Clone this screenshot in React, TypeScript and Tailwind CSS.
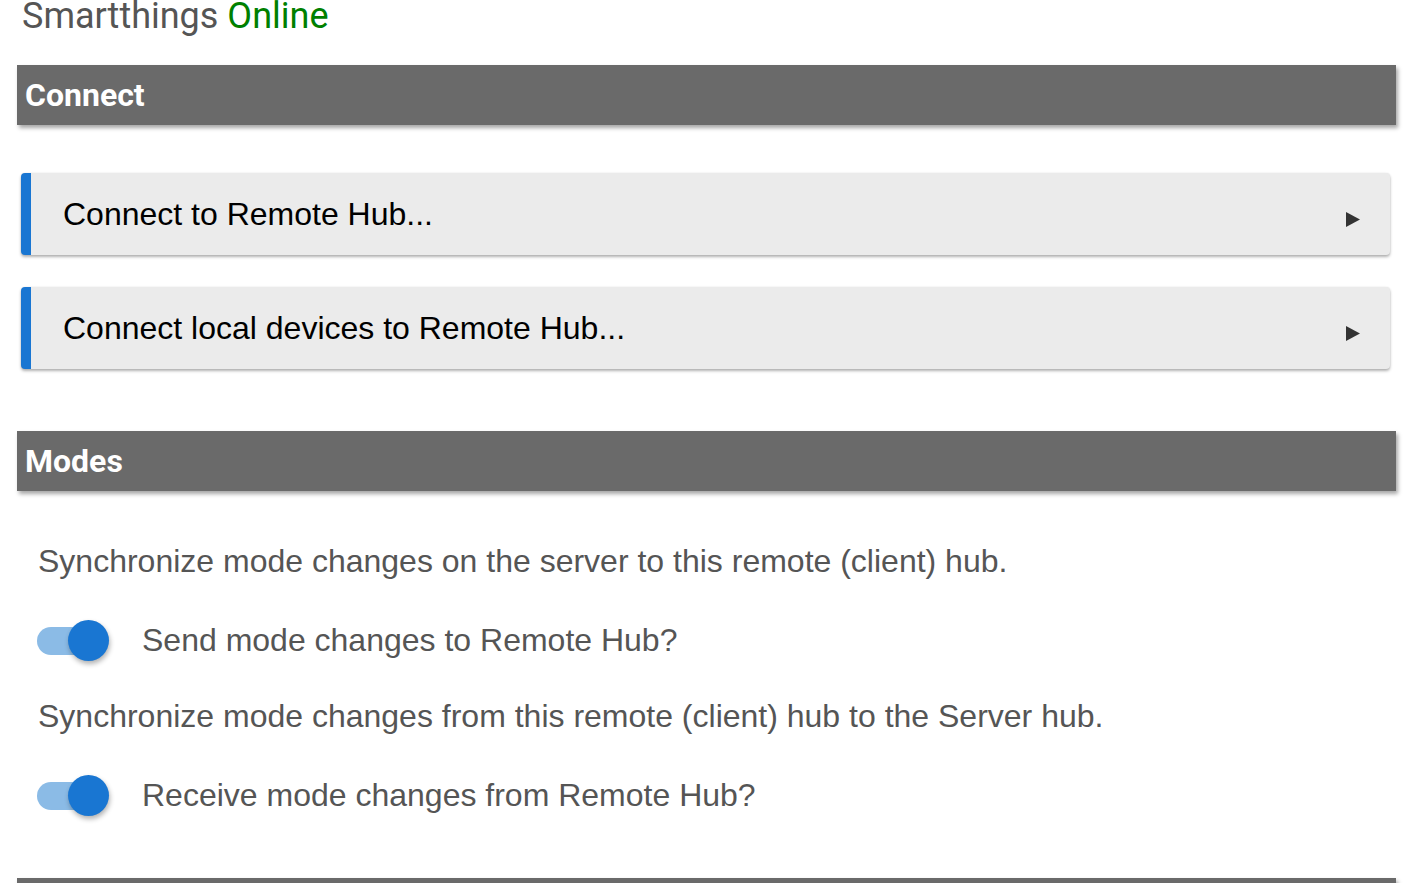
import { useState } from "react";

function SectionHeader({ title }: { title?: string }) {
  return (
    <div className="flex h-[60px] items-center bg-[#6a6a6a] pl-2 shadow-[2px_3px_4px_rgba(0,0,0,0.35)]">
      {title && <h2 className="font-['Roboto',sans-serif] text-[32px] font-bold text-white">{title}</h2>}
    </div>
  );
}

function LinkItem({ label }: { label: string }) {
  return (
    <div className="flex h-[82px] items-center justify-between rounded-[4px] border-l-[10px] border-[#1976d2] bg-[#ebebeb] pl-[32px] pr-[30px] shadow-[0_2px_3px_rgba(0,0,0,0.3),0_0_2px_rgba(0,0,0,0.08)]">
      <span className="mb-[1px] font-['Liberation_Sans',Arial,sans-serif] text-[32px] text-black">{label}</span>
      <svg viewBox="0 0 14 15" className="mt-[11px] h-[15px] w-[14px]" fill="#333">
        <path d="M0 0 L14 7.5 L0 15 Z" />
      </svg>
    </div>
  );
}

function Toggle({ label, initial }: { label: string; initial: boolean }) {
  const [on, setOn] = useState(initial);
  return (
    <div className="-ml-[1px] flex h-[48px] items-center">
      <button
        type="button"
        onClick={() => setOn(!on)}
        className="relative h-[40px] w-[72px] shrink-0"
      >
        <span
          className={`absolute left-0 top-[7px] h-[28px] w-[68px] rounded-full ${on ? "bg-[#8bbbe6]" : "bg-[#bdbdbd]"}`}
        />
        <span
          className={`absolute top-0 h-[41px] w-[41px] rounded-full shadow-[1px_3px_5px_rgba(0,0,0,0.3)] ${on ? "left-[31px] bg-[#1976d2]" : "left-0 bg-[#fafafa]"}`}
        />
      </button>
      <span className="ml-[33px] font-['Liberation_Sans',Arial,sans-serif] text-[32px] text-[#555]">{label}</span>
    </div>
  );
}

export default function App() {
  return (
    <main className="min-h-screen w-[1420px] overflow-hidden bg-white pl-[17px] pr-[24px]">
      <h1 className="-mt-[2px] pl-[5px] font-['Roboto',sans-serif] text-[36px] leading-[36px] text-[#555]">
        Smartthings <span className="text-[#008000]">Online</span>
      </h1>

      <div className="mt-[31px]">
        <SectionHeader title="Connect" />
      </div>

      <div className="mt-[48px] flex flex-col gap-[32px] pl-[4px] pr-[6px]">
        <LinkItem label="Connect to Remote Hub..." />
        <LinkItem label="Connect local devices to Remote Hub..." />
      </div>

      <div className="mt-[62px]">
        <SectionHeader title="Modes" />
      </div>

      <div className="pl-[21px] font-['Liberation_Sans',Arial,sans-serif] text-[32px] text-[#555]">
        <p className="mt-[50px] leading-[40px]">Synchronize mode changes on the server to this remote (client) hub.</p>
        <div className="mt-[35px]">
          <Toggle label="Send mode changes to Remote Hub?" initial={true} />
        </div>
        <p className="mt-[32px] leading-[40px]">Synchronize mode changes from this remote (client) hub to the Server hub.</p>
        <div className="mt-[35px]">
          <Toggle label="Receive mode changes from Remote Hub?" initial={true} />
        </div>
      </div>

      <div className="mt-[59px]">
        <SectionHeader />
      </div>
    </main>
  );
}
